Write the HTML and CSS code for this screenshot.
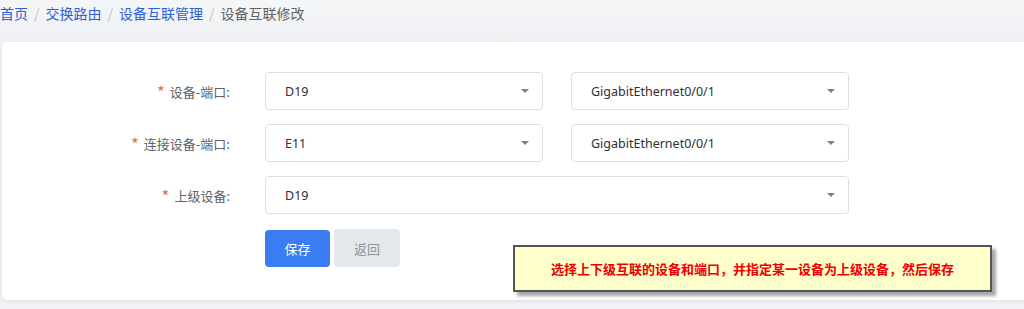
FILE: index.html
```html
<!DOCTYPE html>
<html lang="zh">
<head>
<meta charset="utf-8">
<link rel="stylesheet" href="styles.css">
</head>
<body>
<nav class="crumbs">
  <a class="crumb-link">首页</a><span class="sep">/</span>
  <a class="crumb-link">交换路由</a><span class="sep">/</span>
  <a class="crumb-link">设备互联管理</a><span class="sep">/</span>
  <span class="crumb-current">设备互联修改</span>
</nav>
<main class="card">
  <div class="form">
    <div class="row">
      <label class="label"><span class="star">*</span>设备-端口:</label>
      <div class="fields">
        <div class="select half"><span>D19</span><i class="arrow"></i></div>
        <div class="select half"><span>GigabitEthernet0/0/1</span><i class="arrow"></i></div>
      </div>
    </div>
    <div class="row">
      <label class="label"><span class="star">*</span>连接设备-端口:</label>
      <div class="fields">
        <div class="select half"><span>E11</span><i class="arrow"></i></div>
        <div class="select half"><span>GigabitEthernet0/0/1</span><i class="arrow"></i></div>
      </div>
    </div>
    <div class="row">
      <label class="label"><span class="star">*</span>上级设备:</label>
      <div class="fields">
        <div class="select full"><span>D19</span><i class="arrow"></i></div>
      </div>
    </div>
    <div class="row buttons">
      <div class="label"></div>
      <div class="fields btns">
        <button class="btn primary">保存</button>
        <button class="btn secondary">返回</button>
      </div>
    </div>
  </div>
  <div class="callout">选择上下级互联的设备和端口，并指定某一设备为上级设备，然后保存</div>
</main>
</body>
</html>
```
FILE: styles.css
```css
* { box-sizing: border-box; }
html, body { margin: 0; padding: 0; }
body {
  background: #f0f2f5;
  font-family: "Noto Sans", "Noto Sans CJK SC", sans-serif;
  width: 1024px;
  height: 309px;
  overflow: hidden;
}
.crumbs {
  height: 42px;
  padding-top: 3px;
  font-size: 14px;
  line-height: 20px;
  display: flex;
  align-items: flex-start;
  background: linear-gradient(#f5f6f8, #eef0f3);
  font-family: "Noto Sans CJK SC", sans-serif;
}
.crumb-link { color: #2f5fd8; }
.sep { color: #c0c4cc; margin: 0 6px; }
.crumb-current { color: #606266; }
.card {
  position: relative;
  margin-left: 2px;
  width: 1040px;
  height: 258px;
  background: #fff;
  border-radius: 5px;
  box-shadow: 0 1px 4px rgba(0,0,0,0.08);
  padding-top: 30px;
}
.form { display: flex; flex-direction: column; gap: 14px; }
.row { display: flex; align-items: center; gap: 35px; height: 38px; }
.label {
  width: 228px;
  text-align: right;
  font-size: 13px;
  line-height: 18px;
  color: #606266;
  font-family: "Noto Sans CJK SC", sans-serif;
}
.star { color: #e5734f; font-size: 17px; margin-right: 5px; position: relative; top: 2px; }
.fields { display: flex; gap: 28px; }
.select {
  height: 38px;
  border: 1px solid #dcdfe6;
  border-radius: 4px;
  display: flex;
  align-items: center;
  justify-content: space-between;
  padding: 0 13px 0 19px;
  font-size: 12.5px;
  color: #303133;
}
.half { width: 278px; }
.full { width: 584px; }
.arrow {
  width: 0; height: 0;
  border-left: 4px solid transparent;
  border-right: 4px solid transparent;
  border-top: 4px solid #7c7f99;
}
.buttons { margin-top: 1px; }
.btns { gap: 4px; align-items: center; }
.btn {
  height: 37px;
  border: none;
  border-radius: 4px;
  font-family: "Noto Sans CJK SC", sans-serif;
  font-size: 13px;
  cursor: pointer;
}
.primary { width: 65px; background: #3a7cf2; color: #fff; }
.secondary { width: 66px; height: 38px; background: #e4e8eb; color: #909399; }
.callout {
  position: absolute;
  left: 511px;
  top: 203px;
  width: 479px;
  height: 47px;
  background: #ffffcc;
  border: 2px solid #555;
  box-shadow: 4px 4px 3px rgba(0,0,0,0.35);
  color: #ee0000;
  font-weight: bold;
  font-size: 13px;
  display: flex;
  align-items: center;
  justify-content: center;
  font-family: "Noto Sans CJK SC", sans-serif;
}
```
